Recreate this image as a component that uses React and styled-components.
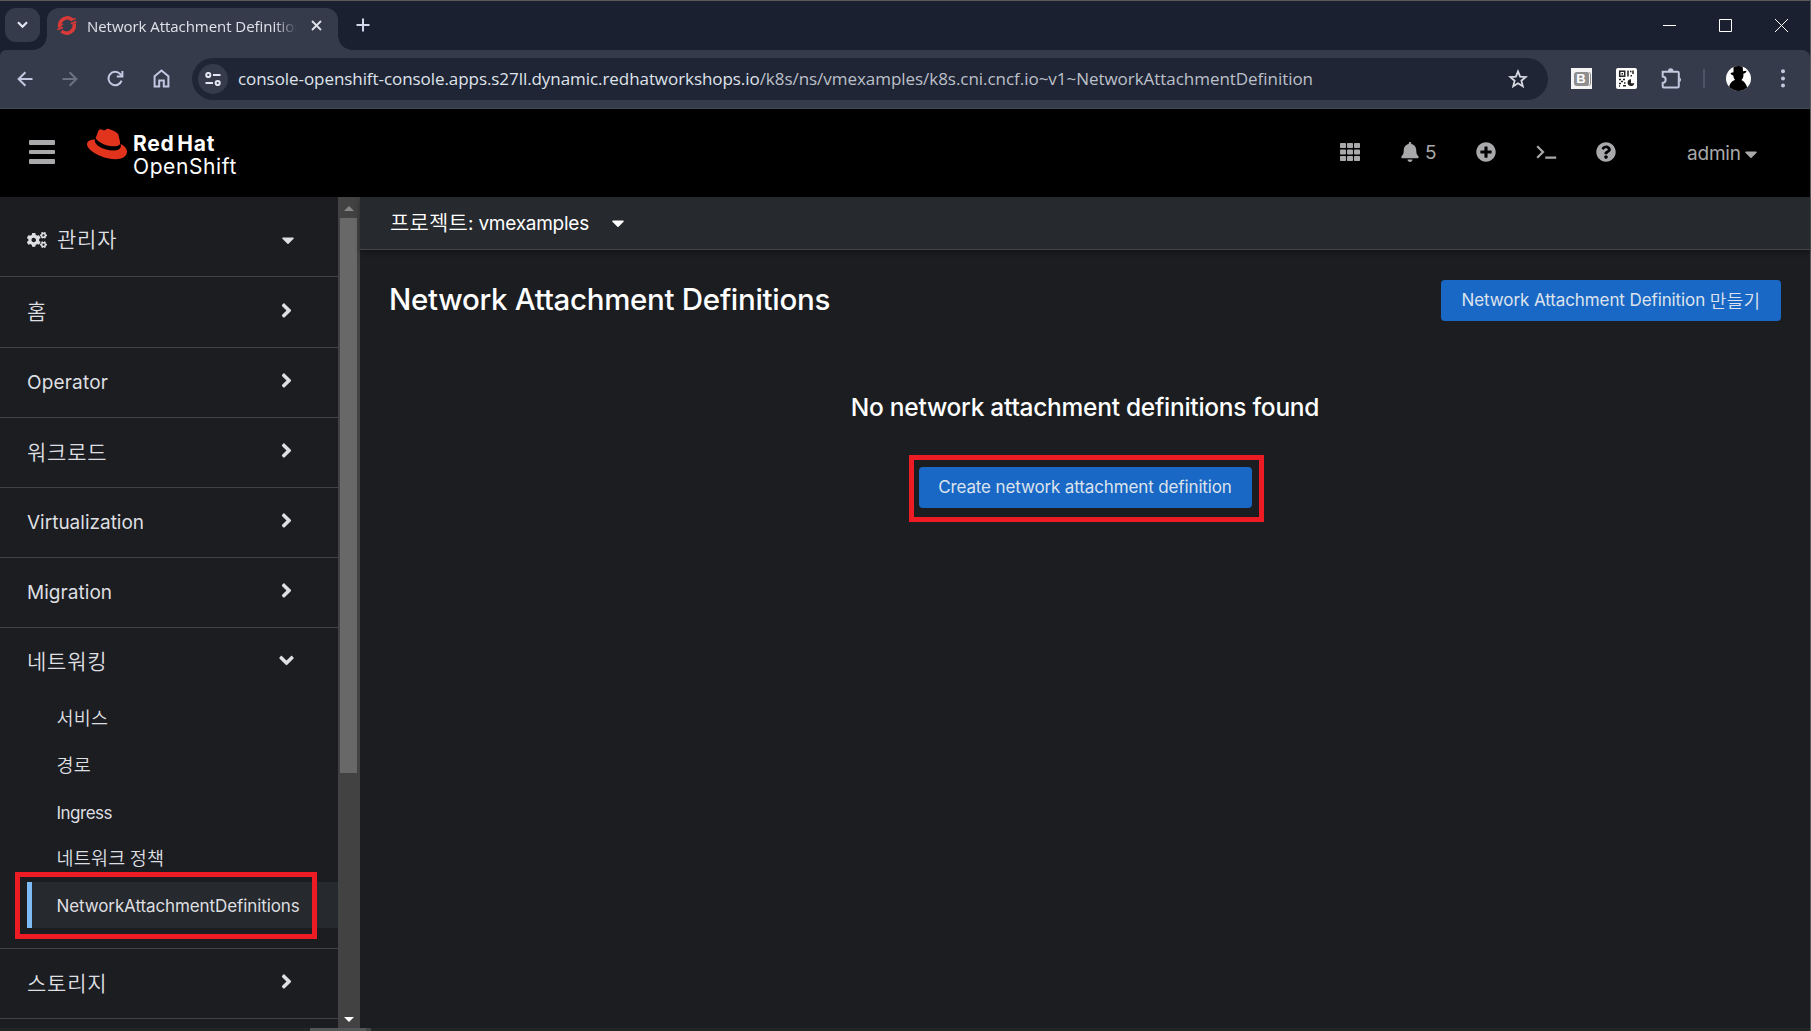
import React from "react";
import styled, { createGlobalStyle, css } from "styled-components";
import {
  FaAngleDown,
  FaAngleRight,
  FaBell,
  FaCaretDown,
  FaCogs,
  FaPlusCircle,
  FaQuestionCircle,
  FaRedhat,
} from "react-icons/fa";

const uiFont = `Inter, "Noto Sans CJK KR", sans-serif`;
const chromeFont = `"Open Sans", "Noto Sans", sans-serif`;

const GlobalStyle = createGlobalStyle`
  *, *::before, *::after { box-sizing: border-box; }
  html, body { margin: 0; height: 100%; overflow: hidden; background: #1b1d21; }
  #root { height: 100%; }
  svg { display: block; flex: none; }
  button { font: inherit; border: 0; padding: 0; background: none; }
`;

const Window = styled.div`
  display: flex;
  flex-direction: column;
  width: 1811px;
  height: 1031px;
  border-top: 1px solid #5c5a58;
  border-right: 1px solid #57585a;
  background: #1b1d21;
  font-family: ${uiFont};
  font-variant-ligatures: none;
`;

/* ---------- browser chrome ---------- */

const TabStrip = styled.div`
  display: flex;
  align-items: flex-start;
  height: 49px;
  padding-left: 5px;
  background: #1a202f;
`;

const TabSearch = styled.button`
  display: flex;
  align-items: center;
  justify-content: center;
  width: 35px;
  height: 34px;
  margin-top: 7px;
  border-radius: 11px;
  background: #353b4a;
  color: #e4e7f2;
`;

const Tab = styled.div`
  position: relative;
  display: flex;
  align-items: center;
  width: 291px;
  height: 42px;
  margin: 7px 0 0 7px;
  padding: 0 16px 8px 10px;
  border-radius: 12px 12px 0 0;
  background: #353b4a;
  color: #dfe2ea;

  &::before,
  &::after {
    content: "";
    position: absolute;
    bottom: 0;
    width: 14px;
    height: 14px;
  }
  &::before {
    left: -14px;
    background: radial-gradient(circle at 0 0, transparent 13.5px, #353b4a 14px);
  }
  &::after {
    right: -14px;
    background: radial-gradient(circle at 100% 0, transparent 13.5px, #353b4a 14px);
  }
`;

const TabTitle = styled.span`
  flex: none;
  width: 209px;
  margin: 2px 15px 0 10px;
  overflow: hidden;
  white-space: nowrap;
  font: 400 15px/20px ${chromeFont};
  letter-spacing: -0.05px;
  mask-image: linear-gradient(90deg, #000 188px, transparent 210px);
`;

const NewTab = styled.button`
  display: flex;
  margin: 17px 0 0 18px;
  color: #d3d8ea;
`;

const WindowControls = styled.div`
  display: flex;
  gap: 43px;
  margin: 18px 22px 0 auto;
  color: #fff;
`;

const Toolbar = styled.div`
  display: flex;
  align-items: center;
  height: 59px;
  padding: 0 25px 1px 17px;
  border-bottom: 1px solid #434c52;
  background: #353b4a;
  border-top-right-radius: 8px;
  border-top-left-radius: 6px;
  color: #c3c8df;
`;

const ToolbarShell = styled.div`
  background: #1a202f;
`;

const NavButtons = styled.div`
  display: flex;
  align-items: center;
  gap: 29px;
  width: 175px;
`;

const NavButton = styled.button`
  display: flex;
  color: ${(p) => (p.$dim ? "#6d7280" : "#c3c8e2")};
`;

const AddressBar = styled.div`
  display: flex;
  align-items: center;
  width: 1356px;
  height: 42px;
  padding: 0 20px 0 6px;
  border-radius: 21px;
  background: #1f2535;
  color: #d6d9e0;
`;

const SiteInfo = styled.div`
  display: flex;
  align-items: center;
  justify-content: center;
  width: 30px;
  height: 30px;
  border-radius: 50%;
  background: #353b4a;
  color: #e4e7f2;
`;

const Url = styled.div`
  flex: 1;
  padding: 1px 0 0 10px;
  white-space: nowrap;
  font: 400 17px/24px ${chromeFont};
  color: #dfe3ea;
`;

const UrlHost = styled.span`
  letter-spacing: -0.065px;
`;

const UrlPath = styled.span`
  letter-spacing: -0.04px;
  color: #bcc0c9;
`;

const Extensions = styled.div`
  display: flex;
  align-items: center;
  flex: 1;
  padding-left: 23px;
  gap: 24px;
`;

const BookTile = styled.div`
  display: flex;
  align-items: center;
  justify-content: center;
  width: 21px;
  height: 21px;
  background: #f4f4f4;
`;

const BookLetter = styled.span`
  width: 16px;
  height: 14px;
  border-radius: 3px;
  background: #8f8f8f;
  color: #fff;
  font: 700 13px/14px "Liberation Sans", sans-serif;
  text-align: center;
  border-right: 1px solid #f4f4f4;
  box-shadow: 1px 0 0 #8f8f8f;
`;

const Divider = styled.span`
  width: 2px;
  height: 19px;
  margin: 0 -3px 0 -3px;
  background: #4d5467;
`;

/* ---------- console masthead ---------- */

const Masthead = styled.header`
  display: flex;
  align-items: center;
  height: 88px;
  padding: 0 53px 0 29px;
  background: #000;
  color: #a9a9ab;
`;

const MenuBars = styled.button`
  display: flex;
  flex-direction: column;
  gap: 5px;
  width: 26px;
  margin-bottom: 2px;
`;

const MenuBar = styled.span`
  height: 4.6px;
  border-radius: 1px;
  background: #a9a9ab;
`;

const Brand = styled.div`
  display: flex;
  align-items: flex-start;
  height: 88px;
  margin-left: 32px;
  color: #e2341d;
`;

const BrandHat = styled.div`
  margin-top: 15px;
`;

const BrandName = styled.div`
  display: flex;
  flex-direction: column;
  margin: 23px 0 0 6px;
  color: #fff;
`;

const BrandLine = styled.span`
  font-size: 21px;
  line-height: 23px;
  font-weight: ${(p) => (p.$strong ? 700 : 400)};
  letter-spacing: ${(p) => (p.$strong ? "0.75px" : "0.6px")};
  word-spacing: ${(p) => (p.$strong ? "-3px" : "0")};
`;

const MastheadTools = styled.div`
  display: flex;
  align-items: center;
  margin-left: auto;
  height: 22px;
`;

const ToolSlot = styled.button`
  display: flex;
  align-items: center;
  width: ${(p) => p.$width}px;
  margin-bottom: 2px;
  color: #a9a9ab;
`;

const AlertCount = styled.span`
  margin-left: 5px;
  padding-top: 2px;
  font-size: 19px;
  line-height: 22px;
`;

const UserName = styled.span`
  padding-top: 3px;
  font-size: 19px;
  line-height: 24px;
  letter-spacing: -0.2px;
`;

const UserCaret = styled.span`
  padding-top: 3px;
`;

/* ---------- body ---------- */

const Body = styled.div`
  display: flex;
  height: 831px;
`;

const Sidebar = styled.nav`
  width: 338px;
  color: #dedfe1;
`;

const rowBase = css`
  display: flex;
  align-items: center;
  padding: 0 44px 0 27px;
`;

const Perspective = styled.div`
  ${rowBase}
  height: 80px;
  padding-top: 7px;
  padding-right: 40px;
  border-bottom: 1px solid #414245;
`;

const NavRow = styled.div`
  ${rowBase}
  height: ${(p) => p.$height}px;
  border-bottom: ${(p) => (p.$open ? "0" : "1px solid #414245")};
`;

const Label = styled.span`
  margin-right: auto;
  line-height: 26px;
  white-space: nowrap;
  ${(p) =>
    p.$hangul
      ? css`
          font-family: "Noto Sans CJK KR", sans-serif;
          font-weight: 350;
          font-size: ${p.$small ? 18.5 : 21}px;
          letter-spacing: ${p.$small ? 0.2 : 0.75}px;
          padding-bottom: 4px;
        `
      : css`
          font-size: ${p.$small ? 17 : 19}px;
          letter-spacing: ${p.$tracking ?? 0}px;
          padding-top: 1px;
        `}
`;

const PerspectiveLabel = styled(Label)`
  margin-left: 10px;
`;

const Chevron = styled.span`
  display: flex;
  justify-content: center;
  width: 16px;
  margin-bottom: 4px;
  color: #dedfe1;
`;

const SubList = styled.div`
  padding-bottom: 20px;
  border-bottom: 1px solid #414245;
`;

const SubItem = styled.div`
  display: flex;
  align-items: center;
  height: ${(p) => (p.$active ? 46 : 46.5)}px;
  margin-left: 27px;
  padding-left: ${(p) => (p.$active ? 24.5 : 29.5)}px;
  border-left: ${(p) => (p.$active ? "5px solid #7dbbf7" : "0")};
  background: ${(p) => (p.$active ? "#26292d" : "transparent")};
  position: relative;
`;

const ScrollTrack = styled.div`
  display: flex;
  flex-direction: column;
  align-items: center;
  width: 22px;
  padding: 9px 3px 6px 2px;
  background: #424242;
`;

const ScrollArrow = styled.span`
  width: 0;
  height: 0;
  border: 5px solid transparent;
  ${(p) =>
    p.$down
      ? css`
          margin-top: auto;
          border-top-color: #fff;
          border-bottom: 0;
        `
      : css`
          border-bottom-color: #868686;
          border-top: 0;
        `}
`;

const ScrollThumb = styled.span`
  width: 17px;
  height: 555px;
  margin-top: 7px;
  background: #686868;
`;

const Main = styled.main`
  display: flex;
  flex-direction: column;
  flex: 1;
`;

const ProjectBar = styled.div`
  display: flex;
  align-items: center;
  height: 53px;
  padding: 0 30px 1px;
  border-bottom: 1px solid #444548;
  background: #26292d;
  box-shadow: 0 2px 5px rgba(0, 0, 0, 0.4);
  color: #fff;
  font-size: 19px;
`;

const ProjectName = styled.span`
  margin: 0 19px 0 0;
  line-height: 26px;
  white-space: pre;
  letter-spacing: -0.25px;
`;

const ProjectWord = styled.span`
  font: 350 21px/26px "Noto Sans CJK KR", sans-serif;
  letter-spacing: 0.2px;
`;

const PageHeader = styled.div`
  display: flex;
  align-items: center;
  justify-content: space-between;
  padding: 28px 29px 0 30px;
  height: 72px;
`;

const PageTitle = styled.h1`
  margin: 0 0 2px -1px;
  color: #fff;
  font-size: 29.5px;
  line-height: 38px;
  font-weight: 500;
  letter-spacing: -0.3px;
`;

const PrimaryButton = styled.button`
  display: flex;
  align-items: center;
  justify-content: center;
  white-space: pre;
  width: ${(p) => p.$width}px;
  height: 41px;
  padding-bottom: ${(p) => p.$lift || 0}px;
  border-radius: 4px;
  background: #1a68c6;
  color: #dde3ec;
  font-size: 17px;
  line-height: 24px;
  letter-spacing: ${(p) => p.$tracking}px;
`;

const ButtonHangul = styled.span`
  font: 350 18px/24px "Noto Sans CJK KR", sans-serif;
  letter-spacing: 0.3px;
`;

const EmptyState = styled.section`
  display: flex;
  flex-direction: column;
  align-items: center;
  padding-top: 68px;
`;

const EmptyTitle = styled.h2`
  margin: 0 0 43px;
  color: #fff;
  font-size: 24.5px;
  line-height: 34px;
  font-weight: 500;
  letter-spacing: -0.27px;
`;

const Callout = styled.div`
  position: relative;
  display: flex;
`;

const Mark = styled.span`
  position: absolute;
  top: ${(p) => p.$top}px;
  left: ${(p) => p.$left}px;
  width: ${(p) => p.$width}px;
  height: 67px;
  border: 5px solid #ed1c24;
  pointer-events: none;
`;

const BottomStrip = styled.div`
  display: flex;
  height: 3px;
  padding-left: 310px;
  background: #242527;
`;

const BottomThumb = styled.span`
  width: ${(p) => p.$width}px;
  background: ${(p) => p.$tone};
`;

/* ---------- drawings ---------- */

const stroke = { fill: "none", stroke: "currentColor" };

const Favicon = () => (
  <svg width="20" height="21" viewBox="0 0 20 21" fill="none" stroke="#d93a38">
    <path d="M3 12.5A7.6 7.6 0 0 1 15.5 5" strokeWidth="3.4" />
    <path d="M17 8.5A7.6 7.6 0 0 1 4.5 16" strokeWidth="3.4" />
    <path d="M0.8 10.8 6 8.9M0.3 14.6 6 12.4M14 8.6 19.6 6.4M13 5.6 18.6 3.6" strokeWidth="1.6" />
  </svg>
);

const HomeIcon = () => (
  <svg width="17" height="19" viewBox="0 0 17 19" {...stroke} strokeWidth="2">
    <path d="M1.6 17.6V7.2L8.5 1.5l6.9 5.7v10.4h-4.6v-6.2H6.2v6.2z" />
  </svg>
);

const ReloadIcon = () => (
  <svg width="17" height="17" viewBox="0 0 17 17" {...stroke} strokeWidth="2">
    <path d="M14.6 10.6A6.7 6.7 0 1 1 13.2 4L15.2 6" />
    <path d="M15.4 1v5.6H9.8" />
  </svg>
);

const ArrowIcon = ({ flip }) => (
  <svg width="16" height="16" viewBox="0 0 16 16" {...stroke} strokeWidth="2">
    <path
      d={flip ? "M0.5 8h13.6M7.6 1.2 14.4 8l-6.8 6.8" : "M15.5 8H1.9M8.4 1.2 1.6 8l6.8 6.8"}
    />
  </svg>
);

const TuneIcon = () => (
  <svg width="16" height="14" viewBox="0 0 16 14" {...stroke} strokeWidth="2">
    <circle cx="3.3" cy="3" r="2.1" />
    <path d="M8 3h7.5M0.5 11H8" />
    <circle cx="12.7" cy="11" r="2.1" />
  </svg>
);

const StarIcon = () => (
  <svg width="20" height="20" viewBox="0 0 20 20" {...stroke} strokeWidth="1.8">
    <path d="M10 2.4l2.1 5.3 5.6.4-4.3 3.6 1.4 5.6L10 14.2l-4.8 3.1 1.4-5.6L2.3 8.1l5.6-.4z" />
  </svg>
);

const QrIcon = () => (
  <svg width="21" height="21" viewBox="0 0 21 21">
    <rect width="21" height="21" rx="2" fill="#fff" />
    <g fill="none" stroke="#222" strokeWidth="1.5">
      <rect x="3.7" y="3.2" width="5" height="5" />
      <path d="M12 2.5v6M14 3.5h1.5M17 2.5v3.5M14.5 7.7h1.5" />
      <path d="M3 11.5h2M7 11.5h2M5 13.5h2M3 15.5h2M3 18h1M7 17.7h3M8 15h1.5" />
    </g>
    <rect x="5.5" y="5" width="1.5" height="1.5" fill="#222" />
    <path d="M15 11.2a3.4 3.4 0 1 0 3.3 4H15z" fill="#222" />
  </svg>
);

const PuzzleIcon = () => (
  <svg width="21" height="21" viewBox="0 0 21 21">
    <path
      d="M1.700 3.800h14.800q1.300 0 1.300 1.300v13.200q0 1.300-1.300 1.300H2.700q-1 0-1-1.300v-3.400q3-.5 3-3.200t-3-3.100z"
      {...stroke}
      strokeWidth="2"
    />
    <path d="M7 3a2.700 2.700 0 0 1 5.400 0zM18.400 9.200a2.700 2.700 0 0 1 0 5z" fill="currentColor" />
  </svg>
);

const AvatarIcon = () => (
  <svg width="25" height="25" viewBox="0 0 25 25">
    <defs>
      <clipPath id="avatar-clip">
        <circle cx="12.5" cy="12.5" r="12.5" />
      </clipPath>
    </defs>
    <g clipPath="url(#avatar-clip)">
      <rect width="25" height="25" fill="#fff" />
      <path
        d="M7.500 0h9l.6 5.200 3.200-.4q.4 2-2.900 3v2.500q-.3 2.600-1.900 3.700 3.500 1.600 5 5.500L22 25H3q-.2-5 1-7 1.500-3 5-4.300-1.600-1.400-1.700-4.200Q4.600 8.800 4.500 7l3-.8z"
        fill="#000"
      />
    </g>
  </svg>
);

const DotsIcon = () => (
  <svg width="4" height="19" viewBox="0 0 4 19" fill="currentColor">
    <circle cx="2" cy="2.200" r="2" />
    <circle cx="2" cy="9.400" r="2" />
    <circle cx="2" cy="16.600" r="2" />
  </svg>
);

const GridIcon = () => (
  <svg width="20" height="18" viewBox="0 0 20 18" fill="currentColor">
    {[0, 7, 14].map((x) =>
      [0, 6.5, 13].map((y) => (
        <rect key={`${x}-${y}`} x={x} y={y} width="6" height="5" rx="0.8" />
      ))
    )}
  </svg>
);

const TerminalIcon = () => (
  <svg width="21" height="15" viewBox="0 0 21 15" {...stroke} strokeWidth="2.2">
    <path d="M1.200 1.200 7 7 1.200 12.800M9.200 12.600h11" />
  </svg>
);

/* ---------- data ---------- */

const sections = [
  { label: "홈", hangul: true, height: 71 },
  { label: "Operator", height: 70, tracking: 0.18 },
  { label: "워크로드", hangul: true, height: 70 },
  { label: "Virtualization", height: 70 },
  { label: "Migration", height: 70, tracking: 0.05 },
];

const networking = [
  { label: "서비스", hangul: true },
  { label: "경로", hangul: true },
  { label: "Ingress", tracking: -0.5 },
  { label: "네트워크 정책", hangul: true },
  { label: "NetworkAttachmentDefinitions", active: true, tracking: -0.1 },
];

const Section = ({ label, hangul, height, open, tracking }) => (
  <NavRow $height={height} $open={open}>
    <Label $hangul={hangul} $tracking={tracking}>{label}</Label>
    <Chevron>{open ? <FaAngleDown size={23} /> : <FaAngleRight size={23} />}</Chevron>
  </NavRow>
);

export default function App() {
  return (
    <Window>
      <GlobalStyle />
      <TabStrip>
        <TabSearch>
          <svg width="11" height="8" viewBox="0 0 11 8" {...stroke} strokeWidth="2.2">
            <path d="M1 1.200 5.500 5.700 10 1.200" />
          </svg>
        </TabSearch>
        <Tab>
          <Favicon />
          <TabTitle>Network Attachment Definitions</TabTitle>
          <svg width="11" height="11" viewBox="0 0 11 11" {...stroke} strokeWidth="1.8">
            <path d="M1 1l9 9M10 1l-9 9" />
          </svg>
        </Tab>
        <NewTab>
          <svg width="14" height="14" viewBox="0 0 14 14" {...stroke} strokeWidth="2">
            <path d="M7 .5v13M.5 7h13" />
          </svg>
        </NewTab>
        <WindowControls>
          <svg width="13" height="13" viewBox="0 0 13 13" {...stroke}>
            <path d="M0 6.500h13" />
          </svg>
          <svg width="13" height="13" viewBox="0 0 13 13" {...stroke}>
            <path d="M.5.5h12v12H.5z" />
          </svg>
          <svg width="13" height="13" viewBox="0 0 13 13" {...stroke}>
            <path d="M0 0l13 13M13 0L0 13" />
          </svg>
        </WindowControls>
      </TabStrip>

      <ToolbarShell>
        <Toolbar>
          <NavButtons>
            <NavButton><ArrowIcon /></NavButton>
            <NavButton $dim><ArrowIcon flip /></NavButton>
            <NavButton><ReloadIcon /></NavButton>
            <NavButton><HomeIcon /></NavButton>
          </NavButtons>
          <AddressBar>
            <SiteInfo><TuneIcon /></SiteInfo>
            <Url>
              <UrlHost>console-openshift-console.apps.s27ll.dynamic.redhatworkshops.io</UrlHost>
              <UrlPath>/k8s/ns/vmexamples/k8s.cni.cncf.io~v1~NetworkAttachmentDefinition</UrlPath>
            </Url>
            <StarIcon />
          </AddressBar>
          <Extensions>
            <BookTile><BookLetter>B</BookLetter></BookTile>
            <QrIcon />
            <PuzzleIcon />
            <Divider />
            <AvatarIcon />
          </Extensions>
          <DotsIcon />
        </Toolbar>
      </ToolbarShell>

      <Masthead>
        <MenuBars>
          <MenuBar />
          <MenuBar />
          <MenuBar />
        </MenuBars>
        <Brand>
          <BrandHat><FaRedhat size={40} /></BrandHat>
          <BrandName>
            <BrandLine $strong>Red Hat</BrandLine>
            <BrandLine>OpenShift</BrandLine>
          </BrandName>
        </Brand>
        <MastheadTools>
          <ToolSlot $width={60}><GridIcon /></ToolSlot>
          <ToolSlot $width={76}>
            <FaBell size={20} />
            <AlertCount>5</AlertCount>
          </ToolSlot>
          <ToolSlot $width={60}><FaPlusCircle size={20} /></ToolSlot>
          <ToolSlot $width={60}><TerminalIcon /></ToolSlot>
          <ToolSlot $width={91}><FaQuestionCircle size={20} /></ToolSlot>
          <ToolSlot $width={70}>
            <UserName>admin</UserName>
            <UserCaret><FaCaretDown size={20} /></UserCaret>
          </ToolSlot>
        </MastheadTools>
      </Masthead>

      <Body>
        <Sidebar>
          <Perspective>
            <FaCogs size={20} />
            <PerspectiveLabel $hangul>관리자</PerspectiveLabel>
            <FaCaretDown size={20} />
          </Perspective>
          {sections.map((s) => (
            <Section key={s.label} {...s} />
          ))}
          <Section label="네트워킹" hangul height={68} open />
          <SubList>
            {networking.map((item) => (
              <SubItem key={item.label} $active={item.active}>
                <Label $small $hangul={item.hangul} $tracking={item.tracking}>{item.label}</Label>
                {item.active && <Mark $top={-10} $left={-17} $width={302} />}
              </SubItem>
            ))}
          </SubList>
          <Section label="스토리지" hangul height={70} />
        </Sidebar>
        <ScrollTrack>
          <ScrollArrow />
          <ScrollThumb />
          <ScrollArrow $down />
        </ScrollTrack>
        <Main>
          <ProjectBar>
            <ProjectName>
              <ProjectWord>프로젝트</ProjectWord>: vmexamples
            </ProjectName>
            <FaCaretDown size={20} />
          </ProjectBar>
          <PageHeader>
            <PageTitle>Network Attachment Definitions</PageTitle>
            <PrimaryButton $width={340} $tracking={-0.1}>
              Network Attachment Definition <ButtonHangul>만들기</ButtonHangul>
            </PrimaryButton>
          </PageHeader>
          <EmptyState>
            <EmptyTitle>No network attachment definitions found</EmptyTitle>
            <Callout>
              <PrimaryButton $width={333} $tracking={-0.13} $lift={2}>
                Create network attachment definition
              </PrimaryButton>
              <Mark $top={-12} $left={-10} $width={355} />
            </Callout>
          </EmptyState>
        </Main>
      </Body>
      <BottomStrip>
        <BottomThumb $width={56} $tone="#555657" />
        <BottomThumb $width={5} $tone="#434446" />
      </BottomStrip>
    </Window>
  );
}
